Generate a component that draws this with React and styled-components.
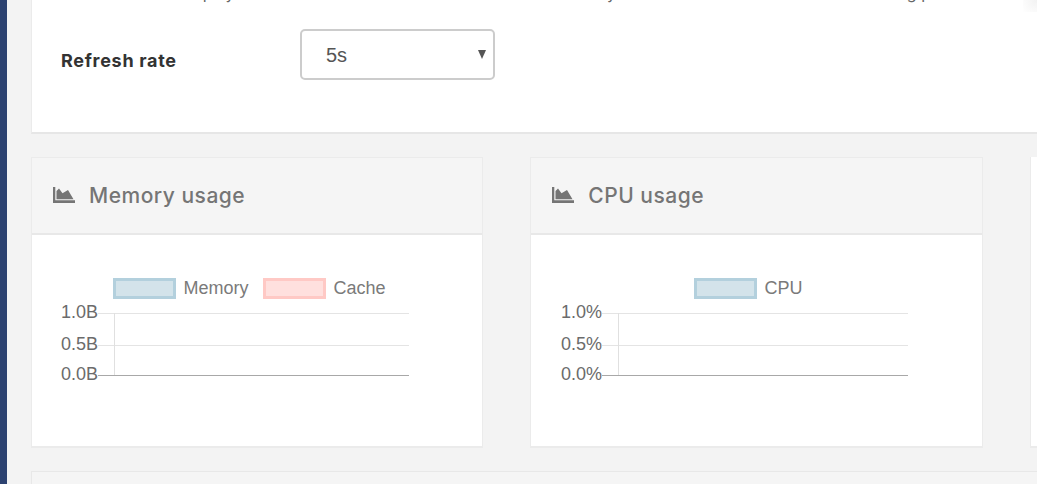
import React from 'react'
import styled, { createGlobalStyle } from 'styled-components'

const GlobalStyle = createGlobalStyle`
  html, body {
    margin: 0;
    height: 100%;
    overflow: hidden;
    background: #f3f3f3;
  }
`

const charts = [
  {
    title: 'Memory usage',
    unit: 'B',
    plotLeft: 82,
    axisStart: 66,
    legend: [
      { name: 'Memory', x: 82.5, fill: '#d3e3ea', stroke: '#b3d0dd' },
      { name: 'Cache', x: 232.5, fill: '#ffe0de', stroke: '#ffc9c5' },
    ],
  },
  {
    title: 'CPU usage',
    unit: '%',
    plotLeft: 87,
    axisStart: 71,
    legend: [{ name: 'CPU', x: 164.5, fill: '#d3e3ea', stroke: '#b3d0dd' }],
  },
]

const ticks = [
  { label: '1.0', y: 78 },
  { label: '0.5', y: 110 },
  { label: '0.0', y: 140 },
]

const AreaIcon = () => (
  <svg width="22" height="16" viewBox="0 0 22 16" aria-hidden="true">
    <path d="M0 0h2.300v13.300H22V16H0z" fill="#757575" />
    <path d="M3.500 12.300V4L6 1.500l3.500 4.700L15 3l5.500 9.300z" fill="#757575" />
  </svg>
)

const Chart = ({ unit, plotLeft, axisStart, legend }) => (
  <ChartSvg viewBox="0 0 450 212">
    {legend.map((item) => (
      <g key={item.name}>
        <rect x={item.x} y="44.500" width="60" height="18" fill={item.fill} stroke={item.stroke} strokeWidth="3" />
        <LegendText x={item.x + 69} y="59">{item.name}</LegendText>
      </g>
    ))}
    {ticks.map((tick, i) => (
      <g key={tick.label}>
        <line
          x1={axisStart}
          x2="377"
          y1={tick.y + 0.5}
          y2={tick.y + 0.5}
          stroke={i === 2 ? '#a8a8a8' : '#e4e4e4'}
        />
        <TickText x={axisStart} y={tick.y + 5}>{tick.label}{unit}</TickText>
      </g>
    ))}
    <line x1={plotLeft + 0.5} x2={plotLeft + 0.5} y1="78" y2="140" stroke="#e0e0e0" />
  </ChartSvg>
)

export default function App() {
  return (
    <Page>
      <GlobalStyle />
      <Sidebar />
      <Content>
        <SettingsCard>
          <Description>
            The dashboard displays the current state of this instance and its memory use as charts refresh at the rate during peak hours
          </Description>
          <RefreshRow>
            <RefreshLabel>Refresh rate</RefreshLabel>
            <SelectBox>
              5s
              <Caret />
            </SelectBox>
          </RefreshRow>
        </SettingsCard>
        <ChartRow>
          {charts.map((chart) => (
            <ChartCard key={chart.title}>
              <CardHeader>
                <AreaIcon />
                <CardTitle>{chart.title}</CardTitle>
              </CardHeader>
              <Chart {...chart} />
            </ChartCard>
          ))}
          <ChartCard />
        </ChartRow>
        <BottomCard />
      </Content>
      <CornerShade />
    </Page>
  )
}

const Page = styled.div`
  position: relative;
  display: flex;
  width: 1037px;
  height: 484px;
  overflow: hidden;
  background: #f3f3f3;
  font-family: 'Inter', 'Liberation Sans', sans-serif;
`

const Sidebar = styled.div`
  flex: 0 0 7px;
  background: #2c4270;
`

const Content = styled.div`
  flex: 0 0 1100px;
  margin-left: 24px;
  display: flex;
  flex-direction: column;
  & > * {
    flex-shrink: 0;
  }
`

const SettingsCard = styled.section`
  box-sizing: border-box;
  height: 134px;
  padding: 0 29px;
  background: #fff;
  border-bottom: 2px solid #e6e6e6;
  border-left: 1px solid #ebebeb;
  overflow: hidden;
`

const Description = styled.p`
  margin: -17px 0 0;
  height: 20px;
  font-size: 16px;
  line-height: 20px;
  letter-spacing: 0.05px;
  color: #666;
  white-space: nowrap;
`

const RefreshRow = styled.div`
  display: flex;
  align-items: center;
  margin-top: 26px;
`

const RefreshLabel = styled.label`
  width: 239px;
  padding-top: 11px;
  font-size: 18px;
  font-weight: 700;
  letter-spacing: 0.7px;
  color: #333;
`

const SelectBox = styled.div`
  box-sizing: border-box;
  position: relative;
  width: 195px;
  height: 51px;
  padding: 2px 0 0 24px;
  display: flex;
  align-items: center;
  border: 2px solid #ccc;
  border-radius: 5px;
  font-family: 'Liberation Sans', sans-serif;
  font-size: 20px;
  color: #555;
`

const Caret = styled.span`
  position: absolute;
  top: 19px;
  right: 7px;
  border-left: 4.5px solid transparent;
  border-right: 4.5px solid transparent;
  border-top: 9px solid #555;
`

const ChartRow = styled.div`
  display: flex;
  gap: 47px;
  margin-top: 23px;
`

const ChartCard = styled.section`
  box-sizing: border-box;
  flex: 0 0 452.25px;
  height: 291px;
  background: #fff;
  border: 1px solid #ebebeb;
  border-bottom-width: 2px;
  border-top: 0;
`

const CardHeader = styled.header`
  box-sizing: border-box;
  height: 78px;
  display: flex;
  align-items: center;
  gap: 14px;
  padding: 0 0 1px 21px;
  background: #f5f5f5;
  border-top: 1px solid #ebebeb;
  border-bottom: 2px solid #e8e8e8;
`

const CardTitle = styled.h3`
  margin: 0;
  font-size: 21px;
  font-weight: 500;
  letter-spacing: 0.5px;
  color: #757575;
`

const ChartSvg = styled.svg`
  display: block;
  width: 450px;
  height: 212px;
  overflow: visible;
`

const LegendText = styled.text`
  font-family: 'Liberation Sans', sans-serif;
  font-size: 18px;
  fill: #7a7a7a;
`

const TickText = styled.text`
  font-family: 'Liberation Sans', sans-serif;
  font-size: 18px;
  fill: #6b6b6b;
  text-anchor: end;
`

const BottomCard = styled.div`
  height: 40px;
  margin-top: 23px;
  background: #f5f5f5;
  border: 1px solid #e8e8e8;
`

const CornerShade = styled.div`
  position: absolute;
  top: 0;
  right: 0;
  width: 14px;
  height: 12px;
  background: radial-gradient(circle at top right, #f2f2f2, rgba(242, 242, 242, 0) 100%);
`
